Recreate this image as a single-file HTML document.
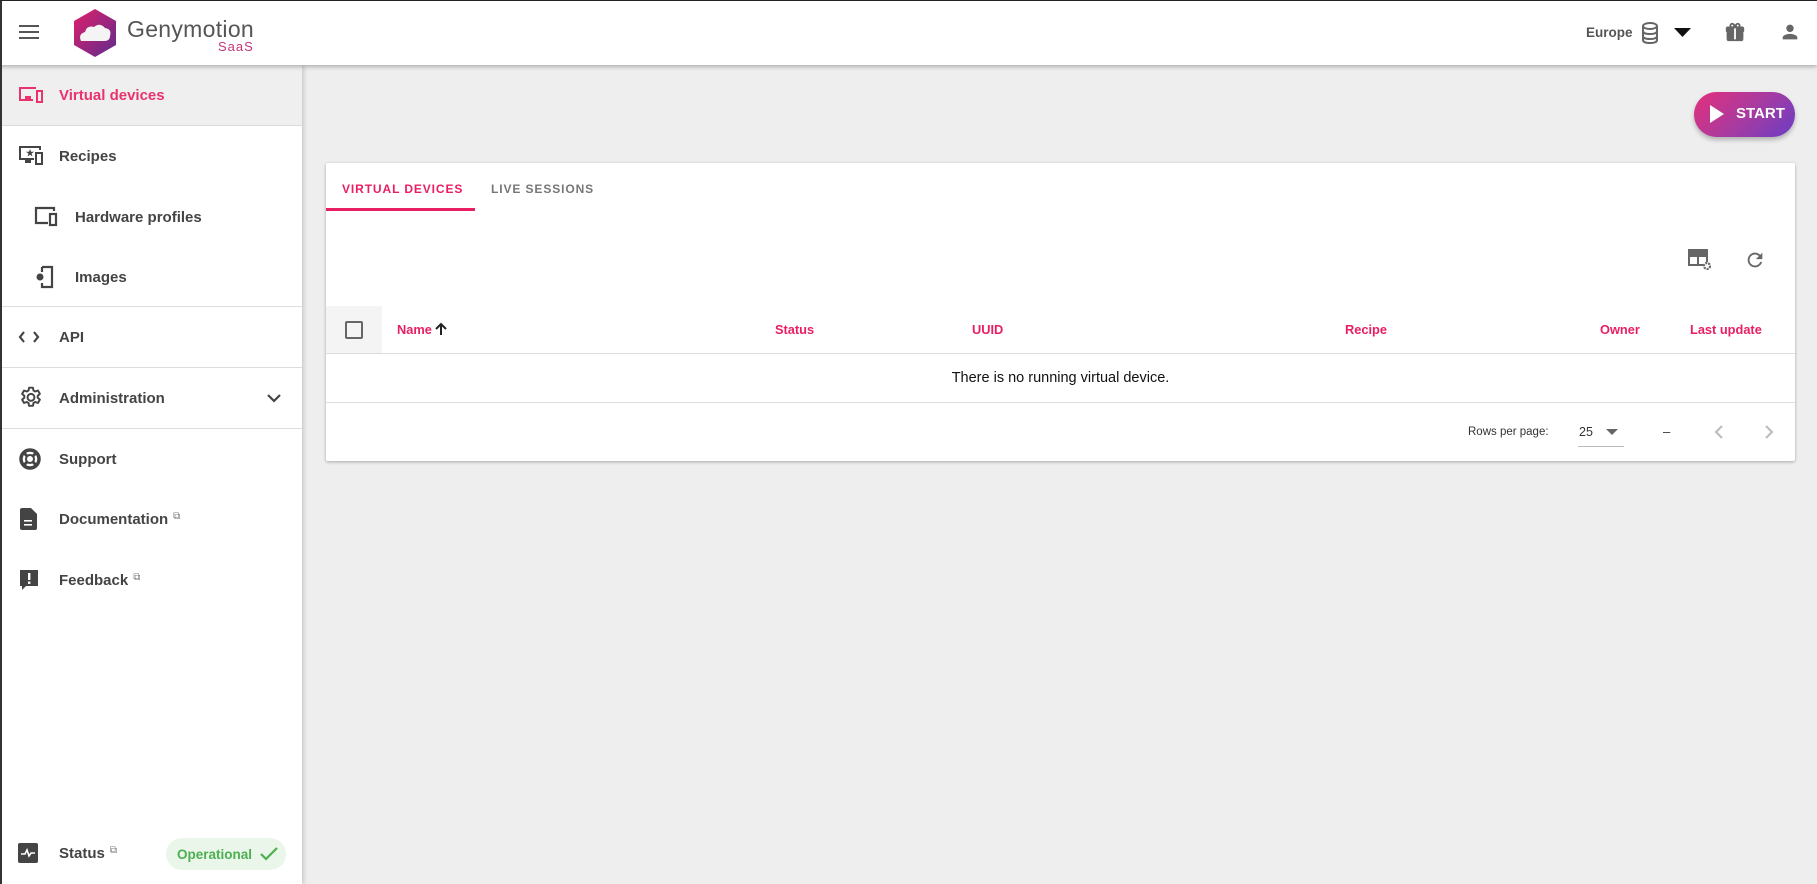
<!DOCTYPE html>
<html><head><meta charset="utf-8"><style>
*{box-sizing:border-box;margin:0;padding:0}
body{width:1817px;height:884px;overflow:hidden;background:#eeeeee;font-family:"Liberation Sans",Arial,sans-serif;position:relative}
.a{position:absolute}
#hdr{left:0;top:0;width:1817px;height:65px;background:#fff;box-shadow:0 2px 4px rgba(0,0,0,.25);z-index:3}
#side{left:0;top:65px;width:302px;height:819px;background:#fff;box-shadow:2px 0 4px rgba(0,0,0,.15);z-index:2}
.it{position:absolute;left:0;width:302px;display:flex;align-items:center;font-size:15px;font-weight:bold;color:#444}
.it svg{position:absolute;left:18px}
.it span{position:absolute;left:59px}
.sub svg{left:34px}.sub span{left:75px}
.div{position:absolute;left:0;width:302px;height:1px;background:#ddd}
.ext{font-size:10px;vertical-align:top;color:#777;margin-left:5px;font-weight:normal}
.th{position:absolute;top:322px;font-size:12.8px;font-weight:bold;color:#e91e63;line-height:16px}
</style></head><body>
<div id="hdr" class="a">
  <svg class="a" style="left:19px;top:23px" width="22" height="18" viewBox="0 0 22 18"><rect y="2" width="20" height="2" fill="#555"/><rect y="8" width="20" height="2" fill="#555"/><rect y="14" width="20" height="2" fill="#555"/></svg>
  <svg class="a" style="left:72px;top:8px" width="46" height="50" viewBox="0 0 46 50">
    <defs><linearGradient id="lg" x1="0" y1="0" x2="1" y2="1"><stop offset="0" stop-color="#e0206a"/><stop offset="1" stop-color="#5e2b8e"/></linearGradient></defs>
    <path d="M23 1 L44 13 L44 37 L23 49 L2 37 L2 13 Z" fill="url(#lg)"/>
    <path d="M9 33 Q6 26 13 24 Q15 17 22 19 Q28 14 33 20 Q40 21 38 28 Q38 33 32 33 Z" fill="#f4f4f4"/>
  </svg>
  <div class="a" style="left:127px;top:16px;font-size:23px;color:#555;letter-spacing:.3px">Genymotion</div>
  <div class="a" style="left:218px;top:39px;font-size:13px;color:#c2357a;letter-spacing:1px">SaaS</div>
  <div class="a" style="left:1586px;top:25px;font-size:13.5px;font-weight:bold;color:#555">Europe</div>
  <svg class="a" style="left:1641px;top:22px" width="18" height="22" viewBox="0 0 18 22"><g fill="none" stroke="#666" stroke-width="2"><ellipse cx="9" cy="4" rx="7" ry="3"/><path d="M2 4v14c0 2 3 3 7 3s7-1 7-3V4M2 9c0 2 3 3 7 3s7-1 7-3M2 14c0 2 3 3 7 3s7-1 7-3"/></g></svg>
  <svg class="a" style="left:1674px;top:28px" width="17" height="9" viewBox="0 0 17 9"><path d="M0 0h17L8.5 9z" fill="#111"/></svg>
  <svg class="a" style="left:1724px;top:21px" width="22" height="22" viewBox="0 0 24 24"><path fill="#666" d="M20 6h-2.18c.11-.31.18-.65.18-1 0-1.66-1.34-3-3-3-1.05 0-1.96.54-2.5 1.35l-.5.67-.5-.68C10.96 2.54 10.05 2 9 2 7.34 2 6 3.34 6 5c0 .35.07.69.18 1H4c-1.11 0-2 .89-2 2v3c0 .55.45 1 1 1h.01v8c0 1.1.89 2 2 2h14c1.1 0 2-.9 2-2v-8c.55 0 1-.45 1-1V8c0-1.11-.89-2-2-2zM15 4c.55 0 1 .45 1 1s-.45 1-1 1-1-.45-1-1 .45-1 1-1zM9 4c.55 0 1 .45 1 1s-.45 1-1 1-1-.45-1-1 .45-1 1-1z"/><rect x="3" y="8" width="8" height="12" fill="#666"/><rect x="13" y="8" width="8" height="12" fill="#666"/><rect x="11" y="8" width="2" height="12" fill="#fff"/></svg>
  <svg class="a" style="left:1779px;top:21px" width="22" height="22" viewBox="0 0 24 24"><path fill="#666" d="M12 12c2.21 0 4-1.79 4-4s-1.79-4-4-4-4 1.79-4 4 1.79 4 4 4zm0 2c-2.67 0-8 1.34-8 4v2h16v-2c0-2.66-5.33-4-8-4z"/></svg>
</div>

<div id="side" class="a">
  <div class="it" style="top:0;height:60px;background:#efefef;color:#e8336d">
    <svg width="26" height="20" viewBox="0 0 26 20"><g fill="none" stroke="#e8336d" stroke-width="2"><path d="M15 15H2V3h16"/><rect x="19" y="6" width="5" height="11"/></g><rect x="7" y="11" width="6" height="5" fill="#e8336d"/></svg>
    <span style="color:#e8336d">Virtual devices</span></div>
  <div class="div" style="top:60px"></div>
  <div class="it" style="top:66px;height:50px"><svg width="26" height="22" viewBox="0 0 26 22"><g fill="none" stroke="#444" stroke-width="2"><path d="M16 14H2V2h20v3"/><rect x="18" y="8" width="6" height="11"/></g><rect x="7" y="15" width="6" height="3" fill="#444"/><text x="8" y="11" font-size="9" fill="#444">★</text></svg><span>Recipes</span></div>
  <div class="it sub" style="top:127px;height:50px"><svg width="26" height="22" viewBox="0 0 26 22"><g fill="none" stroke="#444" stroke-width="2.2"><path d="M14 17H2V2h18v3"/><rect x="16" y="8" width="6" height="11"/></g></svg><span>Hardware profiles</span></div>
  <div class="it sub" style="top:187px;height:50px"><svg width="22" height="24" viewBox="0 0 22 24"><g fill="none" stroke="#444" stroke-width="2.2"><path d="M8 2h10v20H8v-4M8 2v5"/></g><circle cx="6" cy="12" r="3.5" fill="#444"/></svg><span>Images</span></div>
  <div class="div" style="top:241px"></div>
  <div class="it" style="top:247px;height:50px"><svg width="24" height="14" viewBox="0 0 24 14"><path d="M6 2L2 7l4 5M16 2l4 5-4 5" fill="none" stroke="#444" stroke-width="2.2"/></svg><span>API</span></div>
  <div class="div" style="top:302px"></div>
  <div class="it" style="top:308px;height:50px"><svg width="26" height="26" viewBox="0 0 24 24"><g fill="none" stroke="#444" stroke-width="1.8" stroke-linejoin="round"><path d="M10.2 2.5h3.6l.5 2.6 1.6.9 2.5-.9 1.8 3.1-2 1.7v1.9l2 1.7-1.8 3.1-2.5-.9-1.6.9-.5 2.6h-3.6l-.5-2.6-1.6-.9-2.5.9-1.8-3.1 2-1.7v-1.9l-2-1.7 1.8-3.1 2.5.9 1.6-.9z"/><circle cx="12" cy="11.4" r="3.2"/></g></svg><span>Administration</span>
    <svg style="left:266px" width="16" height="10" viewBox="0 0 16 10"><path d="M2 2l6 6 6-6" fill="none" stroke="#444" stroke-width="2.2"/></svg></div>
  <div class="div" style="top:363px"></div>
  <div class="it" style="top:369px;height:50px"><svg width="24" height="24" viewBox="0 0 24 24"><circle cx="12" cy="12" r="9" fill="none" stroke="#444" stroke-width="3.5"/><circle cx="12" cy="12" r="4" fill="none" stroke="#444" stroke-width="2"/><path d="M5 5l4 4M19 5l-4 4M5 19l4-4M19 19l-4-4" stroke="#444" stroke-width="3"/></svg><span>Support</span></div>
  <div class="it" style="top:429px;height:50px"><svg width="20" height="24" viewBox="0 0 20 24"><path d="M2 3q0-2 2-2h9l6 6v14q0 2-2 2H4q-2 0-2-2z" fill="#444"/><rect x="6" y="13" width="8" height="1.6" fill="#fff"/><rect x="6" y="17" width="8" height="1.6" fill="#fff"/></svg><span>Documentation<span class="ext" style="position:static">⧉</span></span></div>
  <div class="it" style="top:490px;height:50px"><svg width="22" height="24" viewBox="0 0 22 24"><path d="M2 2h18v16H8l-4 4v-4H2z" fill="#444"/><rect x="10" y="5" width="2.4" height="7" fill="#fff"/><rect x="10" y="13.5" width="2.4" height="2.4" fill="#fff"/></svg><span>Feedback<span class="ext" style="position:static">⧉</span></span></div>
  <div class="it" style="top:763px;height:50px"><svg width="20" height="20" viewBox="0 0 20 20"><rect width="20" height="20" rx="2" fill="#444"/><path d="M3 11h4l2-4 2 6 2-3h4" fill="none" stroke="#fff" stroke-width="1.6"/></svg><span>Status<span class="ext" style="position:static">⧉</span></span>
    <div class="a" style="left:166px;top:10px;width:120px;height:32px;border-radius:16px;background:#eaf6ea;color:#4caf50;font-size:13.5px;font-weight:bold;display:flex;align-items:center;padding-left:11px">Operational
      <svg style="position:absolute;left:93px;top:8px" width="20" height="16" viewBox="0 0 20 16"><path d="M2 8l5 5L18 2" fill="none" stroke="#4caf50" stroke-width="2.2"/></svg></div></div>
</div>

<div class="a" style="left:1694px;top:92px;width:101px;height:45px;border-radius:23px;background:linear-gradient(135deg,#e4307b,#a43ba2 55%,#6a3dc6);box-shadow:0 3px 5px rgba(0,0,0,.25);color:#fff;font-size:15px;font-weight:bold">
  <svg class="a" style="left:16px;top:13px" width="14" height="18" viewBox="0 0 14 18"><path d="M0 0l14 9-14 9z" fill="#fff"/></svg>
  <span class="a" style="left:42px;top:13px">START</span></div>

<div class="a" style="left:326px;top:163px;width:1469px;height:298px;background:#fff;box-shadow:0 1px 3px rgba(0,0,0,.3);border-radius:2px">
  <div class="a" style="left:16px;top:19px;font-size:12px;font-weight:bold;color:#e91e63;letter-spacing:.9px">VIRTUAL DEVICES</div>
  <div class="a" style="left:165px;top:19px;font-size:12px;font-weight:bold;color:#777;letter-spacing:.9px">LIVE SESSIONS</div>
  <div class="a" style="left:0;top:45px;width:149px;height:3px;background:#e91e63"></div>
  <svg class="a" style="left:1362px;top:86px" width="24" height="22" viewBox="0 0 24 22"><g fill="none" stroke="#666" stroke-width="2"><rect x="1" y="1" width="18" height="15"/><path d="M1 7h18M10 1v15"/></g><rect x="1" y="1" width="18" height="5" fill="#666"/><circle cx="19" cy="17" r="4" fill="#fff"/><circle cx="19" cy="17" r="3" fill="none" stroke="#666" stroke-width="2.2" stroke-dasharray="2 1"/></svg>
  <svg class="a" style="left:1418px;top:86px" width="22" height="22" viewBox="0 0 24 24"><path fill="#666" d="M17.65 6.35C16.2 4.9 14.21 4 12 4c-4.42 0-7.99 3.58-7.99 8s3.57 8 7.99 8c3.73 0 6.840-2.55 7.73-6h-2.08c-.82 2.33-3.04 4-5.65 4-3.31 0-6-2.69-6-6s2.69-6 6-6c1.66 0 3.14.69 4.22 1.78L13 11h7V4l-2.35 2.35z"/></svg>
  <div class="a" style="left:0;top:143px;width:56px;height:47px;background:#f4f4f4"></div>
  <div class="a" style="left:19px;top:158px;width:18px;height:18px;border:2px solid #666;border-radius:2px"></div>
  <div class="a" style="left:0;top:190px;width:1469px;height:1px;background:#ddd"></div>
  <div class="a" style="left:0;top:239px;width:1469px;height:1px;background:#ddd"></div>
  <div class="a" style="left:0;top:207px;width:1469px;text-align:center;font-size:14.5px;color:#111">There is no running virtual device.</div>
  <div class="a" style="left:1142px;top:263px;font-size:11.5px;color:#333">Rows per page:</div>
  <div class="a" style="left:1253px;top:262px;font-size:12.5px;color:#333">25</div>
  <svg class="a" style="left:1280px;top:266px" width="12" height="7" viewBox="0 0 12 7"><path d="M0 0h12L6 6z" fill="#666"/></svg>
  <div class="a" style="left:1252px;top:283px;width:46px;height:1px;background:#bbb"></div>
  <div class="a" style="left:1337px;top:261px;font-size:13px;color:#333">–</div>
  <svg class="a" style="left:1388px;top:262px" width="10" height="14" viewBox="0 0 10 14"><path d="M8 1L2 7l6 6" fill="none" stroke="#bbb" stroke-width="2"/></svg>
  <svg class="a" style="left:1438px;top:262px" width="10" height="14" viewBox="0 0 10 14"><path d="M2 1l6 6-6 6" fill="none" stroke="#bbb" stroke-width="2"/></svg>
</div>
<div class="th" style="left:397px">Name <svg width="12" height="14" viewBox="0 0 12 14" style="vertical-align:-2px"><path d="M6 13V2M1 7l5-5 5 5" fill="none" stroke="#222" stroke-width="2"/></svg></div>
<div class="th" style="left:775px">Status</div>
<div class="th" style="left:972px">UUID</div>
<div class="th" style="left:1345px">Recipe</div>
<div class="th" style="left:1600px">Owner</div>
<div class="th" style="left:1690px">Last update</div>
<div class="a" style="left:0;top:0;width:2px;height:884px;background:#333;z-index:5"></div>
<div class="a" style="left:0;top:0;width:1817px;height:1px;background:#222;z-index:5"></div>
</body></html>
